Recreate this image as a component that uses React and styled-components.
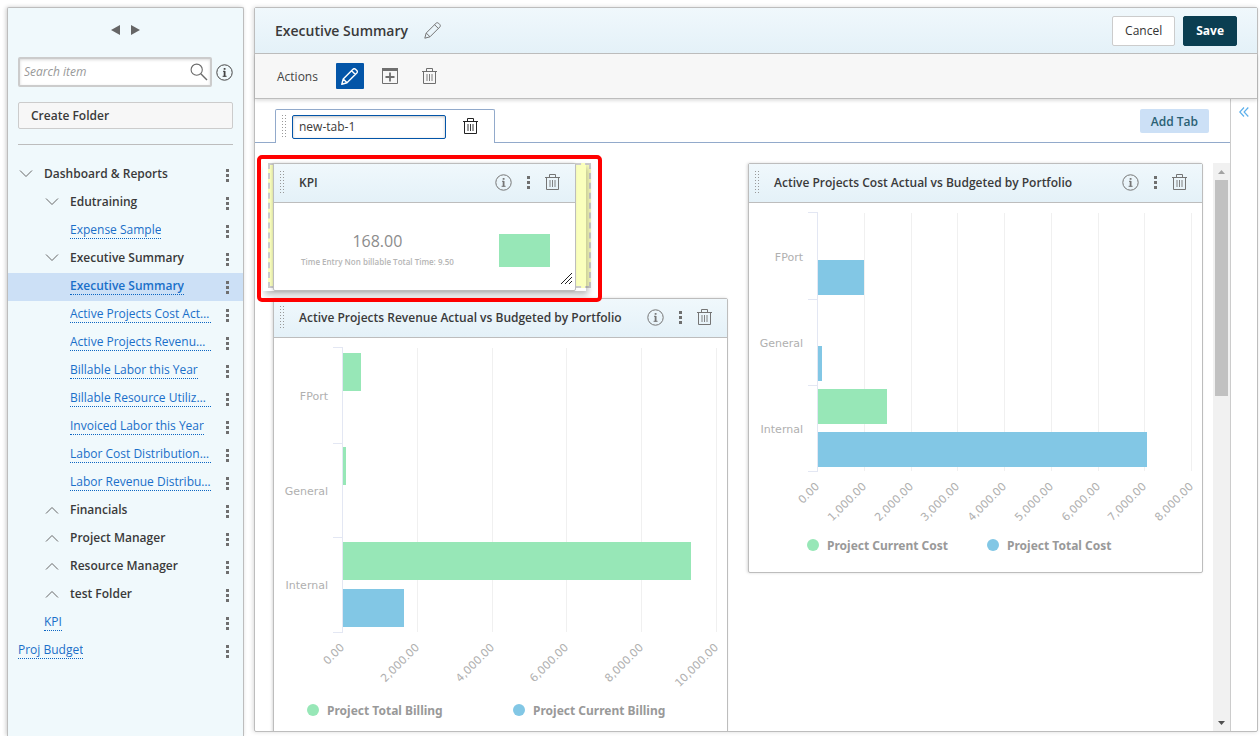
import React from 'react'
import styled, { createGlobalStyle } from 'styled-components'

const GlobalStyle = createGlobalStyle`
  *, *::before, *::after {
    box-sizing: border-box;
  }

  body {
    margin: 0;
    background: #fff;
    color: #3a3a3a;
    font-family: 'Open Sans', 'Noto Sans', sans-serif;
    font-size: 12px;
    line-height: 18px;
  }

  button, input {
    font: inherit;
    color: inherit;
  }
`

const GREEN = '#97e7b7'
const BLUE = '#82c7e5'

const Page = styled.div`
  display: grid;
  grid-template-columns: 237px minmax(0, 1fr);
  gap: 10px;
  height: 100vh;
  padding: 7px 2px 0 7px;
  overflow: hidden;
`

/* sidebar */

const Sidebar = styled.aside`
  display: flex;
  flex-direction: column;
  border: 1px solid #bdbdbd;
  border-bottom: 0;
  border-radius: 2px 2px 0 0;
  background: #f0f9fc;
  box-shadow: -1px 0 4px rgba(0, 0, 0, 0.2);
`

const Arrows = styled.div`
  display: flex;
  justify-content: center;
  gap: 11px;
  padding: 17px 0 22px;
`

const IconButton = styled.button`
  display: flex;
  align-items: center;
  justify-content: center;
  flex: none;
  padding: 0;
  border: 0;
  background: none;
  color: ${({ $color }) => $color || '#757575'};
  cursor: pointer;

  svg {
    display: block;
  }
`

const SearchRow = styled.div`
  display: flex;
  align-items: center;
  gap: 4px;
  padding: 0 10px;
`

const SearchBox = styled.label`
  display: flex;
  align-items: center;
  flex: 1;
  min-width: 0;
  height: 30px;
  padding: 0 2px 0 4px;
  border: 2px solid #ccc;
  border-radius: 2px;
  background: #fff;
  color: #6b6b6b;
  box-shadow: inset 0 1px 3px rgba(0, 0, 0, 0.15);

  input {
    flex: 1;
    min-width: 0;
    padding: 0;
    border: 0;
    outline: 0;
    background: none;
  }

  input::placeholder {
    color: #999;
    font-style: italic;
    opacity: 1;
  }
`

const CreateFolder = styled.button`
  height: 27px;
  margin: 15px 10px 0;
  padding: 0 12px;
  border: 1px solid #ccc;
  border-radius: 2px;
  background: #f7f7f7;
  font-weight: 600;
  text-align: left;
`

const Divider = styled.hr`
  width: calc(100% - 20px);
  margin: 15px 10px 16px;
  border: 0;
  border-top: 1px solid #bdbdbd;
`

const Tree = styled.ul`
  margin: 0;
  padding: 0;
  list-style: none;
`

const TreeRow = styled.li`
  display: flex;
  align-items: center;
  height: 28px;
  padding-left: ${({ $level }) => 10 + $level * 26}px;
  padding-right: 14px;
  background: ${({ $active }) => ($active ? '#cce0f6' : 'none')};
`

const Toggle = styled(IconButton)`
  width: 16px;
  margin-right: 10px;
  padding-bottom: 2px;
`

const TreeLabel = styled.span`
  flex: 1;
  padding-bottom: 3px;
  font-weight: 600;
`

const TreeLinkCell = styled.span`
  flex: 1;
  min-width: 0;
  display: flex;
  padding-bottom: 2px;
`

const TreeLink = styled.a`
  max-width: 141px;
  border-bottom: 1px dotted #0c66c2;
  overflow: hidden;
  color: #1a6fc9;
  font-weight: ${({ $active }) => ($active ? 600 : 400)};
  line-height: 17px;
  text-decoration: none;
  text-overflow: ellipsis;
  white-space: nowrap;
`

const DotsIcon = styled.span`
  display: block;
  width: 3px;
  height: 13px;
  background: repeating-linear-gradient(#6f6f6f 0 3px, transparent 3px 5px);
`

/* main panel */

const Main = styled.main`
  display: flex;
  flex-direction: column;
  min-width: 0;
  min-height: 0;
  margin-bottom: 4px;
  border: 1px solid #bdbdbd;
  border-radius: 2px;
  box-shadow: -1px 0 4px rgba(0, 0, 0, 0.15);
`

const Header = styled.header`
  display: flex;
  align-items: center;
  gap: 16px;
  height: 46px;
  padding: 0 20px;
  border-bottom: 1px solid #bdbdbd;
  background: linear-gradient(#f0f8fc, #e4f1f8);

  h1 {
    margin: 0;
    font-size: 14px;
    font-weight: 600;
  }
`

const Button = styled.button`
  height: 30px;
  padding: 0 12px;
  border: 1px solid ${({ $primary }) => ($primary ? '#0b3e51' : '#ccc')};
  border-radius: 2px;
  background: ${({ $primary }) => ($primary ? '#0b3e51' : '#fff')};
  color: ${({ $primary }) => ($primary ? '#fff' : '#333')};
  font-weight: ${({ $primary }) => ($primary ? 700 : 400)};
`

const HeaderButtons = styled.div`
  display: flex;
  gap: 8px;
  margin-left: auto;
`

const Toolbar = styled.div`
  position: relative;
  display: flex;
  align-items: center;
  gap: 12px;
  height: 45px;
  padding: 0 22px;
  border-bottom: 1px solid #bdbdbd;
  background: #f7f7f7;
  box-shadow: 0 2px 3px rgba(0, 0, 0, 0.12);
`

const ToolButton = styled(IconButton)`
  width: 28px;
  height: 26px;
  border-radius: 1px;
  background: ${({ $active }) => ($active ? '#0355a8' : 'none')};
  color: ${({ $active }) => ($active ? '#fff' : '#6f6f6f')};
`

const ToolLabel = styled.span`
  margin-right: 6px;
  padding-top: 1px;
  color: #444;
`

const Body = styled.div`
  display: flex;
  flex: 1;
  min-height: 0;
`

const Workspace = styled.div`
  display: flex;
  flex-direction: column;
  flex: 1;
  min-width: 0;
`

const SidePanel = styled.div`
  flex: none;
  width: 27px;
  padding: 8px 0 0 8px;
  border-left: 1px solid #ccc;
`

const TabBar = styled.div`
  display: flex;
  align-items: flex-end;
  height: 44px;
  padding: 0 21px 0 20px;
  border-bottom: 1px solid #92aacb;
`

const Tab = styled.div`
  display: flex;
  align-items: center;
  gap: 6px;
  height: 34px;
  margin-bottom: -1px;
  padding: 0 16px 0 6px;
  border: 1px solid #92aacb;
  border-bottom: 0;
  border-radius: 2px 2px 0 0;
  background: #fff;
`

const TabInput = styled.input`
  width: 154px;
  height: 24px;
  margin-right: 11px;
  padding: 0 6px;
  border: 1px solid #0355a8;
  border-radius: 2px;
  outline: 0;
  box-shadow: inset 0 1px 3px rgba(0, 0, 0, 0.25);
`

const AddTab = styled.button`
  height: 24px;
  margin: 0 0 9px auto;
  padding: 1px 11px 0;
  border: 0;
  border-radius: 2px;
  background: #cce0f6;
  color: #2a6074;
  font-weight: 600;
`

const ScrollArea = styled.div`
  display: flex;
  flex: 1;
  min-height: 0;
  margin-top: 20px;
`

const Columns = styled.div`
  display: grid;
  grid-template-columns: repeat(2, minmax(0, 1fr));
  align-items: start;
  gap: 20px;
  flex: 1;
  min-width: 0;
  min-height: 0;
  padding: 0 10px 0 18px;
  /* the highlight frame reaches above the columns, only the bottom is cut */
  clip-path: inset(-20px 0 0 0);
`

const Column = styled.div`
  display: flex;
  flex-direction: column;
  gap: 7px;
`

const Scrollbar = styled.div`
  display: flex;
  flex-direction: column;
  flex: none;
  align-items: center;
  width: 17px;
  background: #f1f1f1;
`

const ScrollThumb = styled.div`
  width: 13px;
  height: 38%;
  background: #c1c1c1;
`

const ScrollArrow = styled.div`
  display: flex;
  align-items: center;
  justify-content: center;
  flex: none;
  height: 17px;
  margin-top: ${({ $end }) => ($end ? 'auto' : '0')};
  color: ${({ $end }) => ($end ? '#505050' : '#a3a3a3')};
`

/* widgets */

const Widget = styled.section`
  border: 1px solid #bdbdbd;
  border-radius: 2px;
  background: #fff;
  box-shadow: -1px 0 3px rgba(0, 0, 0, 0.15);
`

const WidgetHeader = styled.div`
  display: flex;
  align-items: center;
  height: 39px;
  padding: 0 15px 0 6px;
  border-bottom: 1px solid #bdbdbd;
  background: linear-gradient(#f0f8fc, #e4f1f8);

  h2 {
    flex: 1;
    margin: 0 0 0 15px;
    font-size: 12px;
    font-weight: 600;
    white-space: nowrap;
  }
`

const WidgetActions = styled.div`
  display: flex;
  align-items: center;
  gap: 15px;
  padding-bottom: 2px;
`

const KpiSlot = styled.div`
  position: relative;
  z-index: 1;
`

const DropZone = styled.div`
  position: absolute;
  top: 0;
  left: -5px;
  width: 323px;
  height: 125px;
  border: 2px dashed #ccc;
  background: #faffbd;
`

const DragShadow = styled.div`
  position: absolute;
  top: 0;
  bottom: 0;
  left: -10px;
  width: 323px;
  box-shadow: 2px 4px 6px rgba(0, 0, 0, 0.25);
`

const Highlight = styled.div`
  position: absolute;
  top: -8px;
  left: -16px;
  width: 345px;
  height: 147px;
  border: 4px solid #f00;
  border-radius: 5px;
  pointer-events: none;
`

const KpiWidget = styled(Widget)`
  position: relative;
  width: 303px;
`

const KpiBody = styled.div`
  display: flex;
  align-items: center;
  justify-content: space-between;
  height: 87px;
  padding: 8px 25px 0 27px;
`

const KpiText = styled.div`
  color: #b5b5b5;
  font-size: 8px;
  font-weight: 600;
  line-height: 16px;
  text-align: center;

  strong {
    display: block;
    margin-bottom: 3px;
    color: #8c8c8c;
    font-size: 16px;
    font-weight: 400;
    line-height: 20px;
  }
`

const KpiSwatch = styled.div`
  width: 51px;
  height: 33px;
  background: ${GREEN};
`

const ResizeGrip = styled.svg`
  position: absolute;
  right: 2px;
  bottom: 5px;
`

const ChartSvg = styled.svg`
  display: block;
  width: 100%;
  height: auto;
  font-family: Verdana, 'DejaVu Sans', sans-serif;
  font-size: 11px;

  text {
    fill: #b0b0b0;
  }

  .legend {
    font-family: 'Noto Sans', sans-serif;
    font-size: 12px;
    font-weight: 700;
    fill: #999;
  }
`

/* icons */

const Chevron = ({ up }) => (
  <svg width="14" height="8" viewBox="0 0 14 8" fill="none" stroke="#666">
    <path d={up ? 'M1 7.5 7 1.5 13 7.5' : 'M1 .5 7 6.5 13 .5'} />
  </svg>
)

const TriangleIcon = ({ right }) => (
  <svg width="9" height="10" viewBox="0 0 9 10" fill="#666">
    <path d={right ? 'M0 0 9 5 0 10Z' : 'M9 0 0 5 9 10Z'} />
  </svg>
)

const SearchIcon = () => (
  <svg width="18" height="18" viewBox="0 0 18 18" fill="none" stroke="currentColor">
    <circle cx="6.7" cy="6.7" r="5.6" strokeWidth="1.1" />
    <path d="M10.8 10.8 17 17" strokeWidth="1.4" />
  </svg>
)

const InfoIcon = () => (
  <svg width="17" height="17" viewBox="0 0 17 17" fill="none" stroke="currentColor">
    <circle cx="8.5" cy="8.5" r="7.7" strokeWidth="1" />
    <path d="M8.6 7v5.5" strokeWidth="1.8" />
    <path d="M7 7.3h2M6.6 12.3h4" />
    <path d="M7.7 4.9h1.8" strokeWidth="1.7" />
  </svg>
)

const TrashIcon = () => (
  <svg width="15" height="17" viewBox="0 0 15 17" fill="none" stroke="currentColor">
    <path d="M0 3.5h15M4.5 3.5v-3h6v3M1.5 3.5v12h12v-12" />
    <path d="M5 6v7M7.5 6v7M10 6v7" strokeWidth=".9" />
  </svg>
)

const PencilIcon = ({ width = 1 }) => (
  <svg width="17" height="17" viewBox="0 0 17 17" fill="none" stroke="currentColor" strokeWidth={width} strokeLinejoin="round">
    <path d="M.8 16.2 2.2 11 12 1.3c.8-.8 1.8-.7 2.5-.1l1.3 1.3c.7.7.7 1.7 0 2.5L6 14.8ZM2.2 11 6 14.8M10.6 2.7l3.8 3.8" />
  </svg>
)

const AddBoxIcon = () => (
  <svg width="16" height="16" viewBox="0 0 16 16" fill="none" stroke="currentColor">
    <path d="M.5 2v13.5h15V2" />
    <path d="M0 1.5h16" strokeWidth="3" />
    <path d="M8 4.5v9M3.5 9h9" strokeWidth="1.8" />
  </svg>
)

const CollapseIcon = () => (
  <svg width="10" height="10" viewBox="0 0 10 10" fill="none" stroke="#5cb0ec" strokeWidth="1.2">
    <path d="M5 .5.8 5 5 9.5M9.3.5 5.1 5l4.2 4.5" />
  </svg>
)

const DragHandle = () => (
  <svg width="4" height="24" viewBox="0 0 4 24" stroke="#999" strokeDasharray="1 2">
    <path d="M.5 0v24M3.5 0v24" />
  </svg>
)

const tree = [
  { label: 'Dashboard & Reports', level: 0, open: true },
  { label: 'Edutraining', level: 1, open: true },
  { label: 'Expense Sample', level: 2, link: true },
  { label: 'Executive Summary', level: 1, open: true },
  { label: 'Executive Summary', level: 2, link: true, active: true },
  { label: 'Active Projects Cost Actual', level: 2, link: true },
  { label: 'Active Projects Revenue Actual', level: 2, link: true },
  { label: 'Billable Labor this Year', level: 2, link: true },
  { label: 'Billable Resource Utilization', level: 2, link: true },
  { label: 'Invoiced Labor this Year', level: 2, link: true },
  { label: 'Labor Cost Distribution by', level: 2, link: true },
  { label: 'Labor Revenue Distribution', level: 2, link: true },
  { label: 'Financials', level: 1 },
  { label: 'Project Manager', level: 1 },
  { label: 'Resource Manager', level: 1 },
  { label: 'test Folder', level: 1 },
  { label: 'KPI', level: 1, link: true },
  { label: 'Proj Budget', level: 0, link: true },
]

const revenue = {
  plotHeight: 284,
  height: 400,
  max: 10000,
  step: 2000,
  legend: [39, 245],
  legendY: 372,
  series: [
    { name: 'Project Total Billing', color: GREEN, values: [490, 90, 9300] },
    { name: 'Project Current Billing', color: BLUE, values: [0, 0, 1640] },
  ],
}

const cost = {
  plotHeight: 258,
  height: 369,
  max: 8000,
  step: 1000,
  legend: [64, 244],
  legendY: 342,
  series: [
    { name: 'Project Current Cost', color: GREEN, values: [0, 0, 1480] },
    { name: 'Project Total Cost', color: BLUE, values: [980, 90, 7040] },
  ],
}

const PORTFOLIOS = ['FPort', 'General', 'Internal']
const PLOT = { left: 69, top: 10, width: 374 }

function BarChart({ title, plotHeight, height, max, step, legend, legendY, series }) {
  const row = plotHeight / PORTFOLIOS.length
  const bottom = PLOT.top + plotHeight
  const toX = value => Math.round(PLOT.left - 1 + (value / max) * PLOT.width)
  const ticks = Array.from({ length: max / step + 1 }, (_, i) => i * step)

  return (
    <ChartSvg viewBox={`0 0 453 ${height}`} role="img" aria-label={title}>
      {ticks.slice(1).map(tick => (
        <path key={tick} d={`M${toX(tick) + 0.5} ${PLOT.top}V${bottom}`} stroke="#f0f0f0" />
      ))}
      {series.map((s, n) =>
        s.values.map((value, i) => (
          <rect
            key={`${n}-${i}`}
            x={PLOT.left}
            y={Math.round(PLOT.top + row * (i + 0.05 + n * 0.5))}
            width={toX(value) - PLOT.left + 1}
            height={Math.round(row * 0.405)}
            fill={s.color}
          />
        ))
      )}
      <path d={`M${PLOT.left - 0.5} ${PLOT.top - 1}V${bottom + 1}`} stroke="#e3e7f3" />
      {[0, 1, 2, 3].map(i => (
        <path key={i} d={`M59 ${Math.round(PLOT.top + row * i) + (i ? 0.5 : -0.5)}h10`} stroke="#e3e7f3" />
      ))}
      {PORTFOLIOS.map((name, i) => (
        <text key={name} x="54" y={Math.floor(PLOT.top + row * (i + 0.5) + 5.1)} textAnchor="end">
          {name}
        </text>
      ))}
      {ticks.map(tick => (
        <text key={tick} textAnchor="end" transform={`translate(${toX(tick) + 3} ${bottom + 16}) rotate(-45)`}>
          {tick.toLocaleString('en-US', { minimumFractionDigits: 2 })}
        </text>
      ))}
      {series.map((s, n) => (
        <g key={s.name}>
          <circle cx={legend[n]} cy={legendY} r="6" fill={s.color} />
          <text className="legend" x={legend[n] + 14} y={legendY + 5}>
            {s.name}
          </text>
        </g>
      ))}
    </ChartSvg>
  )
}

function WidgetTop({ title }) {
  return (
    <WidgetHeader>
      <DragHandle />
      <h2>{title}</h2>
      <WidgetActions>
        <IconButton aria-label="Info"><InfoIcon /></IconButton>
        <IconButton aria-label="Menu"><DotsIcon /></IconButton>
        <IconButton aria-label="Delete"><TrashIcon /></IconButton>
      </WidgetActions>
    </WidgetHeader>
  )
}

function ChartWidget({ title, chart }) {
  return (
    <Widget>
      <WidgetTop title={title} />
      <BarChart title={title} {...chart} />
    </Widget>
  )
}

function TreeItem({ label, level, link, open, active }) {
  return (
    <TreeRow $level={level} $active={active}>
      {link ? (
        <TreeLinkCell>
          <TreeLink href="#" $active={active}>{label}</TreeLink>
        </TreeLinkCell>
      ) : (
        <>
          <Toggle aria-label={`Toggle ${label}`}><Chevron up={!open} /></Toggle>
          <TreeLabel>{label}</TreeLabel>
        </>
      )}
      <IconButton aria-label={`${label} menu`}><DotsIcon /></IconButton>
    </TreeRow>
  )
}

export default function App() {
  return (
    <>
      <GlobalStyle />
      <Page>
        <Sidebar>
          <Arrows>
            <IconButton aria-label="Back"><TriangleIcon /></IconButton>
            <IconButton aria-label="Forward"><TriangleIcon right /></IconButton>
          </Arrows>
          <SearchRow>
            <SearchBox>
              <input type="text" placeholder="Search item" aria-label="Search item" />
              <SearchIcon />
            </SearchBox>
            <IconButton $color="#444" aria-label="Search info"><InfoIcon /></IconButton>
          </SearchRow>
          <CreateFolder>Create Folder</CreateFolder>
          <Divider />
          <Tree>
            {tree.map((item, i) => (
              <TreeItem key={i} {...item} />
            ))}
          </Tree>
        </Sidebar>

        <Main>
          <Header>
            <h1>Executive Summary</h1>
            <IconButton aria-label="Rename"><PencilIcon /></IconButton>
            <HeaderButtons>
              <Button>Cancel</Button>
              <Button $primary>Save</Button>
            </HeaderButtons>
          </Header>
          <Toolbar>
            <ToolLabel>Actions</ToolLabel>
            <ToolButton $active aria-label="Edit"><PencilIcon width={1.4} /></ToolButton>
            <ToolButton aria-label="Add widget"><AddBoxIcon /></ToolButton>
            <ToolButton aria-label="Delete"><TrashIcon /></ToolButton>
          </Toolbar>
          <Body>
            <Workspace>
              <TabBar>
                <Tab>
                  <DragHandle />
                  <TabInput type="text" defaultValue="new-tab-1" aria-label="Tab name" />
                  <IconButton $color="#222" aria-label="Delete tab"><TrashIcon /></IconButton>
                </Tab>
                <AddTab>Add Tab</AddTab>
              </TabBar>
              <ScrollArea>
                <Columns>
                  <Column>
                    <KpiSlot>
                      <DropZone />
                      <DragShadow />
                      <KpiWidget>
                        <WidgetTop title="KPI" />
                        <KpiBody>
                          <KpiText>
                            <strong>168.00</strong>
                            Time Entry Non billable Total Time: 9.50
                          </KpiText>
                          <KpiSwatch />
                        </KpiBody>
                        <ResizeGrip width="12" height="12" viewBox="0 0 12 12" stroke="#222" fill="none">
                          <path d="M0 11 11 0M4 11l7-7M8 11l3-3" />
                        </ResizeGrip>
                      </KpiWidget>
                      <Highlight />
                    </KpiSlot>
                    <ChartWidget title="Active Projects Revenue Actual vs Budgeted by Portfolio" chart={revenue} />
                  </Column>
                  <Column>
                    <ChartWidget title="Active Projects Cost Actual vs Budgeted by Portfolio" chart={cost} />
                  </Column>
                </Columns>
                <Scrollbar>
                  <ScrollArrow>
                    <svg width="7" height="4" viewBox="0 0 7 4" fill="currentColor"><path d="M0 4 3.5 0 7 4Z" /></svg>
                  </ScrollArrow>
                  <ScrollThumb />
                  <ScrollArrow $end>
                    <svg width="7" height="4" viewBox="0 0 7 4" fill="currentColor"><path d="M0 0 3.5 4 7 0Z" /></svg>
                  </ScrollArrow>
                </Scrollbar>
              </ScrollArea>
            </Workspace>
            <SidePanel>
              <IconButton aria-label="Expand panel"><CollapseIcon /></IconButton>
            </SidePanel>
          </Body>
        </Main>
      </Page>
    </>
  )
}
